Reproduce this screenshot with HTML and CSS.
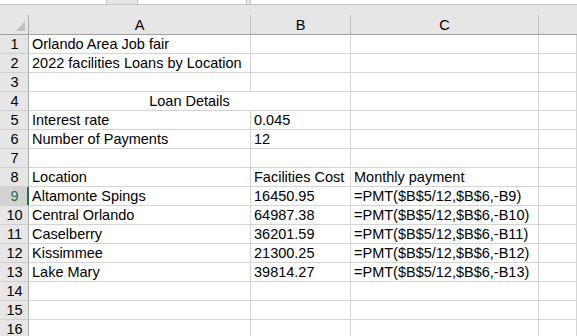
FILE: index.html
```html
<!DOCTYPE html>
<html>
<head>
<meta charset="utf-8">
<link rel="stylesheet" href="styles.css">
</head>
<body>
<div class="app">
  <div class="topbar">
    <div class="tb-box tb-name"></div>
    <div class="tb-gap tb-gap-wide"></div>
    <div class="tb-box tb-mid"></div>
    <div class="tb-gap tb-gap-narrow"></div>
    <div class="tb-box tb-formula"></div>
  </div>
  <div class="spacer"></div>
  <div class="sheet">
    <div class="colhead corner"><span class="tri"></span></div>
    <div class="colhead">A</div>
    <div class="colhead">B</div>
    <div class="colhead">C</div>
    <div class="colhead last"></div>

    <div class="rowhead">1</div><div class="cell">Orlando Area Job fair</div><div class="cell"></div><div class="cell"></div><div class="cell"></div>
    <div class="rowhead">2</div><div class="cell">2022 facilities Loans by Location</div><div class="cell"></div><div class="cell"></div><div class="cell"></div>
    <div class="rowhead">3</div><div class="cell"></div><div class="cell"></div><div class="cell"></div><div class="cell"></div>
    <div class="rowhead">4</div><div class="cell merged">Loan Details</div><div class="cell"></div><div class="cell"></div>
    <div class="rowhead">5</div><div class="cell">Interest rate</div><div class="cell">0.045</div><div class="cell"></div><div class="cell"></div>
    <div class="rowhead">6</div><div class="cell">Number of Payments</div><div class="cell">12</div><div class="cell"></div><div class="cell"></div>
    <div class="rowhead">7</div><div class="cell"></div><div class="cell"></div><div class="cell"></div><div class="cell"></div>
    <div class="rowhead">8</div><div class="cell">Location</div><div class="cell">Facilities Cost</div><div class="cell">Monthly payment</div><div class="cell"></div>
    <div class="rowhead active">9</div><div class="cell">Altamonte Spings</div><div class="cell">16450.95</div><div class="cell">=PMT($B$5/12,$B$6,-B9)</div><div class="cell"></div>
    <div class="rowhead">10</div><div class="cell">Central Orlando</div><div class="cell">64987.38</div><div class="cell">=PMT($B$5/12,$B$6,-B10)</div><div class="cell"></div>
    <div class="rowhead">11</div><div class="cell">Caselberry</div><div class="cell">36201.59</div><div class="cell">=PMT($B$5/12,$B$6,-B11)</div><div class="cell"></div>
    <div class="rowhead">12</div><div class="cell">Kissimmee</div><div class="cell">21300.25</div><div class="cell">=PMT($B$5/12,$B$6,-B12)</div><div class="cell"></div>
    <div class="rowhead">13</div><div class="cell">Lake Mary</div><div class="cell">39814.27</div><div class="cell">=PMT($B$5/12,$B$6,-B13)</div><div class="cell"></div>
    <div class="rowhead">14</div><div class="cell"></div><div class="cell"></div><div class="cell"></div><div class="cell"></div>
    <div class="rowhead">15</div><div class="cell"></div><div class="cell"></div><div class="cell"></div><div class="cell"></div>
    <div class="rowhead">16</div><div class="cell"></div><div class="cell"></div><div class="cell"></div><div class="cell"></div>
  </div>
</div>
</body>
</html>
```

FILE: styles.css
```css
html, body {
  margin: 0;
  padding: 0;
  background: #ffffff;
  overflow: hidden;
}

.app {
  width: 577px;
  height: 336px;
  overflow: hidden;
  font-family: "Liberation Sans", Arial, sans-serif;
  font-size: 14.5px;
  color: #000000;
  background: #e6e6e6;
}

.topbar {
  display: flex;
  height: 5px;
}

.tb-box {
  background: #ffffff;
  border-bottom: 1px solid #c4c4c4;
  box-sizing: border-box;
  height: 5px;
}

.tb-name {
  width: 107px;
  border-right: 1px solid #c4c4c4;
}

.tb-mid {
  width: 110px;
  border-left: 1px solid #c4c4c4;
  border-right: 1px solid #c4c4c4;
}

.tb-formula {
  flex: 1;
  border-left: 1px solid #c4c4c4;
}

.tb-gap {
  border-bottom: 1px solid #c4c4c4;
  box-sizing: border-box;
  height: 5px;
  background: #e6e6e6;
}

.tb-gap-wide { width: 30px; }
.tb-gap-narrow { width: 3px; }

.spacer {
  height: 10px;
  background: #e6e6e6;
}

.sheet {
  display: grid;
  grid-template-columns: 29px 222px 100px 188px 1fr;
  grid-template-rows: 20px;
  grid-auto-rows: 19px;
  background: #ffffff;
}

.colhead {
  background: #e6e6e6;
  border-right: 1px solid #bdbdbd;
  border-bottom: 1px solid #9f9f9f;
  box-sizing: border-box;
  text-align: center;
  line-height: 18px;
  height: 20px;
  padding-top: 1px;
  position: relative;
}

.colhead.corner {
  border-right-color: #ababab;
}

.colhead.last {
  border-right: none;
}

.tri {
  position: absolute;
  right: 3px;
  bottom: 3px;
  width: 0;
  height: 0;
  border-left: 9px solid transparent;
  border-bottom: 10px solid #bfbfbf;
}

.rowhead {
  background: #e6e6e6;
  border-right: 1px solid #ababab;
  border-bottom: 1px solid #d0d0d0;
  box-sizing: border-box;
  text-align: center;
  line-height: 18px;
  padding-left: 1px;
}

.rowhead.active {
  background: #d2d2d2;
  color: #217346;
  border-right-color: #217346;
  box-shadow: inset -1px 0 0 #217346;
}

.cell {
  border-right: 1px solid #d4d4d4;
  border-bottom: 1px solid #d4d4d4;
  box-sizing: border-box;
  line-height: 18px;
  padding-left: 3px;
  white-space: nowrap;
  overflow: visible;
}

.cell.merged {
  grid-column: span 2;
  text-align: center;
  padding-left: 0;
}
```
